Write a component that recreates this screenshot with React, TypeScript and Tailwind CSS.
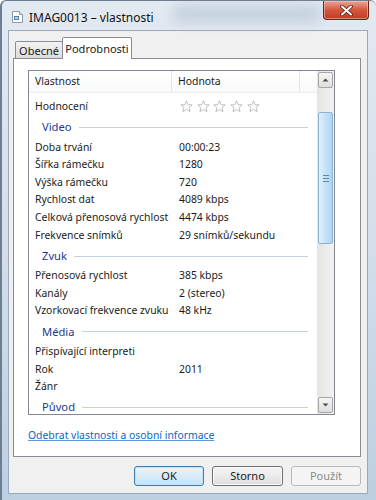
import React from 'react';

type Row = { name: string; value?: string };
type Section = { title: string; rows: Row[] };

const sections: Section[] = [
  {
    title: 'Video',
    rows: [
      { name: 'Doba trvání', value: '00:00:23' },
      { name: 'Šířka rámečku', value: '1280' },
      { name: 'Výška rámečku', value: '720' },
      { name: 'Rychlost dat', value: '4089 kbps' },
      { name: 'Celková přenosová rychlost', value: '4474 kbps' },
      { name: 'Frekvence snímků', value: '29 snímků/sekundu' },
    ],
  },
  {
    title: 'Zvuk',
    rows: [
      { name: 'Přenosová rychlost', value: '385 kbps' },
      { name: 'Kanály', value: '2 (stereo)' },
      { name: 'Vzorkovací frekvence zvuku', value: '48 kHz' },
    ],
  },
  {
    title: 'Média',
    rows: [
      { name: 'Přispívající interpreti' },
      { name: 'Rok', value: '2011' },
      { name: 'Žánr' },
    ],
  },
  { title: 'Původ', rows: [] },
];

function Star() {
  return (
    <svg width="13" height="13" viewBox="0 0 13 13">
      <path
        d="M6.5 0.8 L8.1 4.6 L12.2 4.9 L9.1 7.6 L10.1 11.7 L6.5 9.5 L2.9 11.7 L3.9 7.6 L0.8 4.9 L4.9 4.6 Z"
        fill="#fdfdfd"
        stroke="#b9b9b9"
        strokeWidth="0.9"
        strokeLinejoin="round"
      />
    </svg>
  );
}

function PropRow({ name, value }: Row) {
  return (
    <div className="flex h-[17.6px] items-center text-[#1b1b1b]">
      <div className="w-[143px] shrink-0 pl-[6px] whitespace-nowrap">{name}</div>
      <div className="pl-[7px] whitespace-nowrap">{value}</div>
    </div>
  );
}

function SectionHeader({ title }: { title: string }) {
  return (
    <div className="flex h-[23px] shrink-0 items-center pt-[1px] pl-[13px] pr-[9px]">
      <span className="text-[11.2px] text-[#1e3991]">{title}</span>
      <div className="ml-[7px] h-px flex-1 bg-[#c3cfe2]" />
    </div>
  );
}

function ScrollButton({ up }: { up: boolean }) {
  return (
    <div className="mx-[1px] flex h-[16px] shrink-0 items-center justify-center rounded-[2px] border border-[#a6a6a6] bg-gradient-to-b from-[#f6f6f6] to-[#dedede]">
      <svg width="7" height="4" viewBox="0 0 7 4">
        <path d={up ? 'M0.5 3.5 L3.5 0.5 L6.5 3.5 Z' : 'M0.5 0.5 L3.5 3.5 L6.5 0.5 Z'} fill="#4d4d4d" />
      </svg>
    </div>
  );
}

function Scrollbar() {
  return (
    <div className="flex w-[17px] shrink-0 flex-col bg-gradient-to-r from-[#e4e4e4] to-[#f2f2f2] py-[1px]">
      <ScrollButton up />
      <div className="h-[24px] shrink-0" />
      <div className="mx-[1px] flex h-[132px] shrink-0 flex-col items-center justify-center gap-[2px] rounded-[2px] border border-[#8eb4d4] bg-gradient-to-r from-[#dff0fb] via-[#c4e3f7] to-[#acd5f1]">
        <div className="h-px w-[6px] bg-[#5d87ad]" />
        <div className="h-px w-[6px] bg-[#5d87ad]" />
        <div className="h-px w-[6px] bg-[#5d87ad]" />
      </div>
      <div className="flex-1" />
      <ScrollButton up={false} />
    </div>
  );
}

function TitleIcon() {
  return (
    <svg width="11" height="12" viewBox="0 0 11 12">
      <path d="M0.5 0.5 H7.5 L10.5 3.5 V11.5 H0.5 Z" fill="#ffffff" stroke="#8d9aa8" />
      <path d="M7.5 0.5 V3.5 H10.5" fill="#e6ebf1" stroke="#8d9aa8" />
      <rect x="2" y="5" width="5" height="4" fill="#5b7fa8" />
      <rect x="3" y="6" width="3" height="2" fill="#b9d2ea" />
    </svg>
  );
}

export default function App() {
  return (
    <div className="relative flex h-[500px] w-[376px] flex-col overflow-hidden rounded-t-[6px] border-l-2 border-t border-[#6d7d92] bg-gradient-to-b from-[#e2e9f1] via-[#d3deea] to-[#bccfe3] font-['Noto_Sans',sans-serif] text-[10.4px]">
      <div className="pointer-events-none absolute left-[170px] top-[4px] h-[18px] w-[150px] rounded-full bg-[#b4c3d6] opacity-60 blur-[6px]" />
      <div className="relative flex h-[29px] shrink-0 items-start">
        <div className="ml-[10px] mt-[10px]">
          <TitleIcon />
        </div>
        <div className="ml-[6px] mt-[8px] text-[12px] text-[#111]">IMAG0013 – vlastnosti</div>
        <div className="ml-auto mr-[7px] flex h-[19px] w-[46px] items-center justify-center rounded-b-[4px] border border-t-0 border-[#6a2418] bg-gradient-to-b from-[#e9a597] via-[#d2573f] to-[#c23a22] shadow-[inset_0_0_0_1px_rgba(255,210,200,0.5)]">
          <svg width="13" height="11" viewBox="0 0 13 11">
            <path d="M2 1.5 L11 9.5 M11 1.5 L2 9.5" stroke="#5a1c12" strokeWidth="3.6" strokeLinecap="round" />
            <path d="M2 1.5 L11 9.5 M11 1.5 L2 9.5" stroke="#ffffff" strokeWidth="2" strokeLinecap="round" />
          </svg>
        </div>
      </div>

      <div className="mr-[8px] ml-[6px] flex h-[464px] shrink-0 flex-col border border-[#9aa8b8] bg-[#f0f0f0] pl-[4px] pr-[6px] pt-[6px]">
        <div className="flex h-[21px] shrink-0 items-end pl-[2px]">
          <div className="flex h-[17px] w-[48px] items-center justify-center rounded-t-[2px] border border-b-0 border-[#898c95] bg-gradient-to-b from-[#f3f3f3] to-[#dbdbdb] pt-[2px] text-[11px] text-[#1b1b1b]">
            Obecné
          </div>
          <div className="relative z-10 -mb-px -ml-[1px] flex h-[22px] w-[70px] items-start justify-center rounded-t-[2px] border border-b-0 border-[#898c95] bg-white pt-[3px] text-[11px] text-[#1b1b1b]">
            Podrobnosti
          </div>
        </div>

        <div className="flex h-[399px] shrink-0 flex-col border border-[#898c95] bg-white pl-[14px] pt-[11px]">
          <div className="flex h-[345px] w-[307px] shrink-0 border border-[#828790] bg-white">
            <div className="flex min-w-0 flex-1 flex-col overflow-hidden">
              <div className="flex h-[22px] shrink-0 border-b border-[#ededed] bg-gradient-to-b from-white to-[#f8f9fa] text-[#1b1b1b]">
                <div className="flex w-[143px] shrink-0 items-center border-r border-[#e3e5e8] pl-[6px]">Vlastnost</div>
                <div className="flex w-[128px] shrink-0 items-center border-r border-[#e3e5e8] pl-[6px]">Hodnota</div>
                <div className="flex-1" />
              </div>
              <div className="flex flex-col pt-[5px]">
                <div className="flex h-[17.6px] items-center text-[#1b1b1b]">
                  <div className="w-[143px] shrink-0 pl-[6px]">Hodnocení</div>
                  <div className="flex gap-[3.7px] pl-[8px]">
                    <Star />
                    <Star />
                    <Star />
                    <Star />
                    <Star />
                  </div>
                </div>
                {sections.map((s) => (
                  <React.Fragment key={s.title}>
                    <SectionHeader title={s.title} />
                    {s.rows.map((r) => (
                      <PropRow key={r.name} name={r.name} value={r.value} />
                    ))}
                  </React.Fragment>
                ))}
              </div>
            </div>
            <Scrollbar />
          </div>
          <div className="mt-[13px]">
            <span className="text-[#0a66c2] underline decoration-[#5f9bd6]">Odebrat vlastnosti a osobní informace</span>
          </div>
        </div>

        <div className="mt-[9px] flex justify-end gap-[8px] text-[11px] text-[#1b1b1b]">
          <div className="flex h-[20px] w-[70px] items-center justify-center rounded-[3px] border border-[#3c7fb1] bg-gradient-to-b from-[#eaf5fc] to-[#c9e2f3] shadow-[inset_0_0_0_1px_#bfe3f9]">
            OK
          </div>
          <div className="flex h-[20px] w-[71px] items-center justify-center rounded-[3px] border border-[#707070] bg-gradient-to-b from-[#f4f4f4] via-[#ebebeb] to-[#dcdcdc] shadow-[inset_0_0_0_1px_#fbfbfb]">
            Storno
          </div>
          <div className="flex h-[20px] w-[70px] items-center justify-center rounded-[3px] border border-[#b5b9bc] bg-[#f4f4f4] text-[#8a8a8a]">
            Použít
          </div>
        </div>
      </div>
    </div>
  );
}
